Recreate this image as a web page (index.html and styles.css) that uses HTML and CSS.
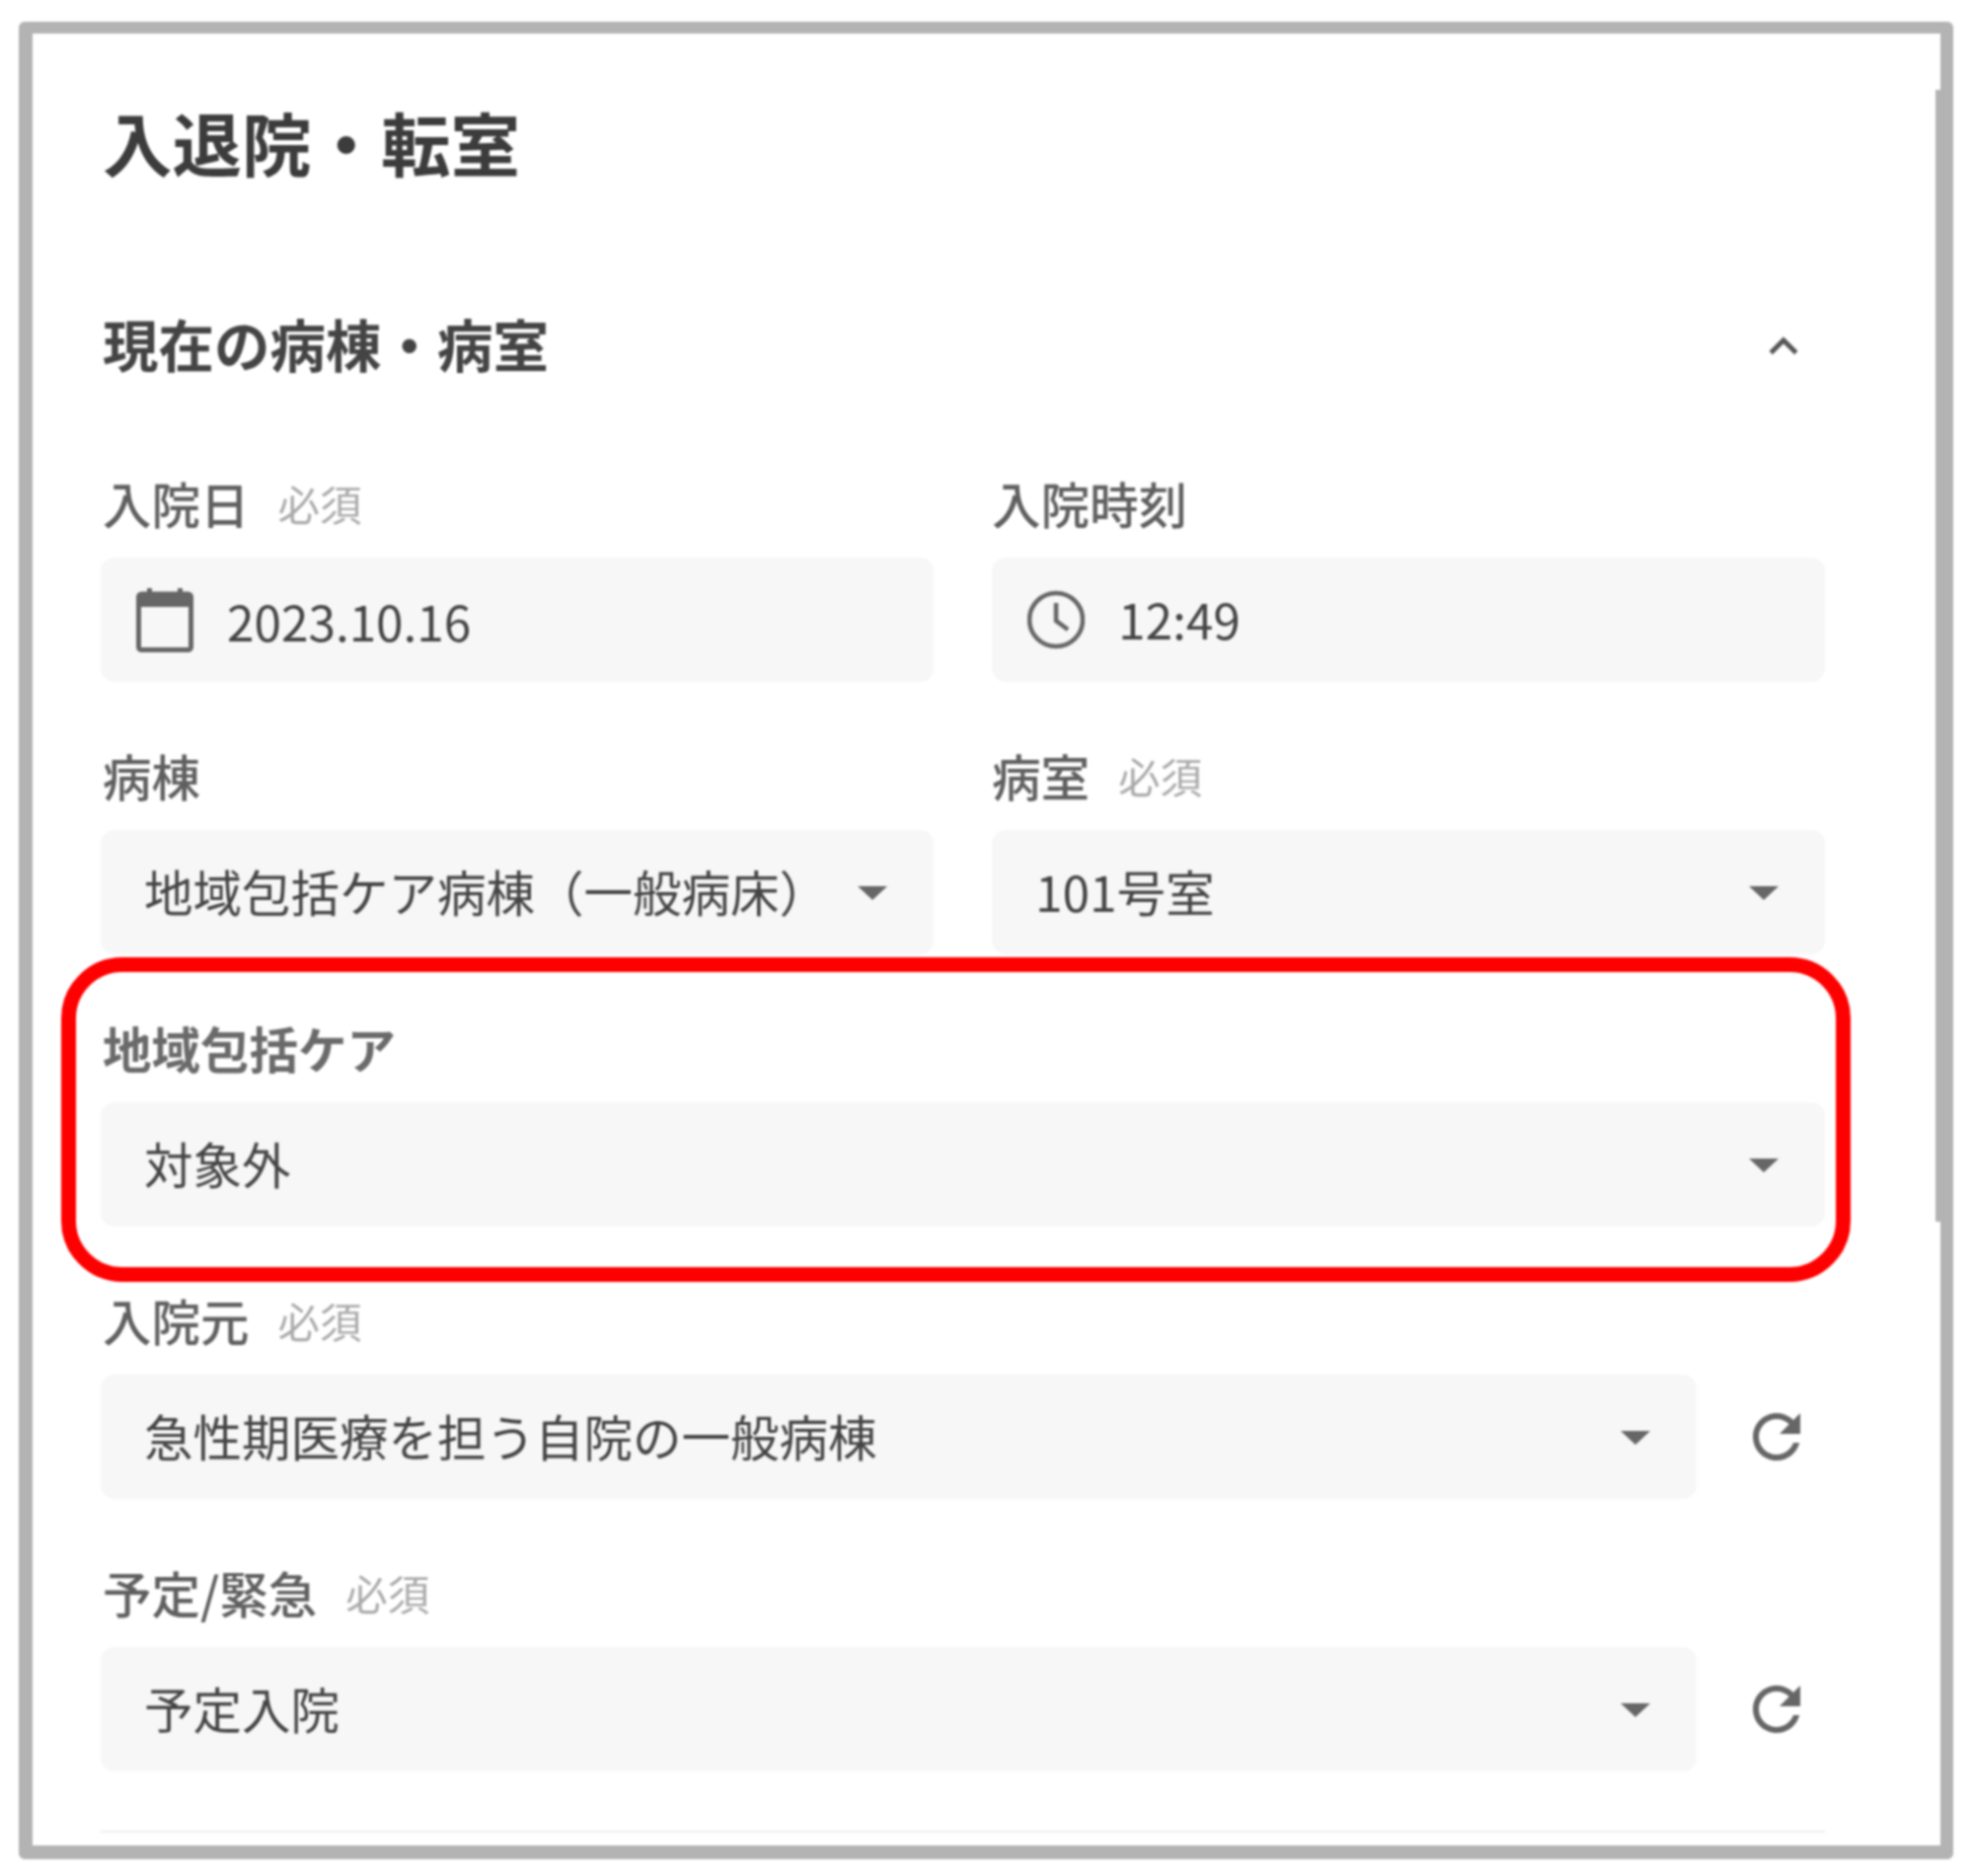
FILE: index.html
```html
<!DOCTYPE html>
<html lang="ja">
<head>
<meta charset="UTF-8" />
<title>入退院・転室</title>
<link rel="stylesheet" href="styles.css">
</head>
<body>
  <div class="frame">
    <div class="scroll-edge"></div>
    <h1 class="page-title">入退院・転室</h1>

    <div class="section-head">
      <h2>現在の病棟・病室</h2>
      <svg class="chevron" viewBox="0 0 24 24"><path d="M12 8l-6 6 1.41 1.41L12 10.83l4.59 4.58L18 14z"/></svg>
    </div>

    <div class="form">
      <div class="row-two">
        <div class="field">
          <div class="label">入院日<span class="required">必須</span></div>
          <div class="box">
            <svg class="box-icon" viewBox="0 0 58 66">
              <rect x="2.5" y="7" width="53" height="56.5" rx="3" fill="none" stroke="#666" stroke-width="5"/>
              <rect x="2" y="6" width="54" height="14" fill="#666"/>
              <rect x="11" y="1" width="5" height="7" fill="#666"/>
              <rect x="42" y="1" width="5" height="7" fill="#666"/>
            </svg>
            <span class="value date">2023.10.16</span>
          </div>
        </div>
        <div class="field">
          <div class="label">入院時刻</div>
          <div class="box">
            <svg class="box-icon" viewBox="0 0 58 66">
              <circle cx="29" cy="33" r="27" fill="none" stroke="#666" stroke-width="4.5"/>
              <path d="M29 16V34L41 43" fill="none" stroke="#666" stroke-width="4.5"/>
            </svg>
            <span class="value">12:49</span>
          </div>
        </div>
      </div>

      <div class="row-two">
        <div class="field">
          <div class="label">病棟</div>
          <div class="box select">
            <span class="value">地域包括ケア病棟（一般病床）</span>
            <i class="caret"></i>
          </div>
        </div>
        <div class="field">
          <div class="label">病室<span class="required">必須</span></div>
          <div class="box select">
            <span class="value">101号室</span>
            <i class="caret"></i>
          </div>
        </div>
      </div>

      <div class="field marked">
        <div class="label">地域包括ケア</div>
        <div class="box select">
          <span class="value">対象外</span>
          <i class="caret"></i>
        </div>
      </div>

      <div class="field">
        <div class="label">入院元<span class="required">必須</span></div>
        <div class="with-reset">
          <div class="box select">
            <span class="value">急性期医療を担う自院の一般病棟</span>
            <i class="caret"></i>
          </div>
          <svg class="reset" viewBox="0 0 24 24"><path d="M17.65 6.35C16.2 4.9 14.21 4 12 4c-4.42 0-7.99 3.58-7.99 8s3.57 8 7.99 8c3.73 0 6.84-2.55 7.73-6h-2.08c-.82 2.33-3.04 4-5.65 4-3.31 0-6-2.69-6-6s2.69-6 6-6c1.66 0 3.14.69 4.22 1.78L13 11h7V4l-2.35 2.35z"/></svg>
        </div>
      </div>

      <div class="field">
        <div class="label">予定/緊急<span class="required">必須</span></div>
        <div class="with-reset">
          <div class="box select">
            <span class="value">予定入院</span>
            <i class="caret"></i>
          </div>
          <svg class="reset" viewBox="0 0 24 24"><path d="M17.65 6.35C16.2 4.9 14.21 4 12 4c-4.42 0-7.99 3.58-7.99 8s3.57 8 7.99 8c3.73 0 6.84-2.55 7.73-6h-2.08c-.82 2.33-3.04 4-5.65 4-3.31 0-6-2.69-6-6s2.69-6 6-6c1.66 0 3.14.69 4.22 1.78L13 11h7V4l-2.35 2.35z"/></svg>
        </div>
      </div>
    </div>

    <div class="divider"></div>
  </div>
</body>
</html>
```

FILE: styles.css
```css
html, body {
  margin: 0;
  padding: 0;
  background: #fff;
}
body {
  width: 2000px;
  height: 1901px;
  overflow: hidden;
  font-family: "Noto Sans CJK JP", "Noto Sans", sans-serif;
}
.frame {
  position: relative;
  box-sizing: border-box;
  width: 1960px;
  height: 1862px;
  margin: 22px 0 0 19px;
  padding: 64px 117px 0 69px;
  background: #fff;
  border-style: solid;
  border-color: #b3b3b3;
  border-width: 12px 13px 14px 14px;
  border-radius: 6px;
  filter: blur(1px);
}
.scroll-edge {
  position: absolute;
  top: 57px;
  right: 0;
  width: 5px;
  height: 1147px;
  background: #b3b3b3;
}
.page-title {
  margin: 0 0 124px 2px;
  font-size: 70.5px;
  line-height: 90px;
  font-weight: 700;
  color: #3c3c3c;
}
.section-head {
  display: flex;
  justify-content: space-between;
  align-items: center;
  height: 80px;
  margin-bottom: 91px;
}
.section-head h2 {
  margin: 0 0 10px 2px;
  font-size: 56.5px;
  line-height: 80px;
  font-weight: 700;
  color: #444;
}
.chevron {
  width: 58px;
  height: 58px;
  margin: 0 13px 2px 0;
  fill: #555;
}
.form {
  display: flex;
  flex-direction: column;
  gap: 68px;
}
.row-two {
  display: grid;
  grid-template-columns: 844px 844px;
  justify-content: space-between;
}
.field {
  position: relative;
}
/* red annotation around the field */
.field.marked::after {
  content: "";
  position: absolute;
  top: -65px;
  left: -40px;
  right: -26px;
  bottom: -56px;
  border: 15px solid #f00;
  border-radius: 62px;
}
.label {
  display: flex;
  align-items: center;
  box-sizing: border-box;
  height: 62px;
  margin-bottom: 20px;
  padding: 0 0 9px 2px;
  font-size: 49.5px;
  font-weight: 500;
  color: #5f5f5f;
}
.row-two .field + .field .label {
  padding-left: 0;
}
.marked .label {
  font-weight: 700;
  color: #6a6a6a;
}
.required {
  margin-left: 29px;
  font-size: 42.5px;
  font-weight: 400;
  color: #aaa;
}
.box {
  display: flex;
  align-items: center;
  flex: 1;
  box-sizing: border-box;
  height: 126px;
  padding: 0 36px;
  background: #f7f7f7;
  border-radius: 14px;
}
.box-icon {
  width: 58px;
  height: 66px;
  margin-right: 34px;
}
.box.select {
  justify-content: space-between;
  padding: 0 47px 0 44px;
}
.value {
  margin-bottom: 4px;
  font-size: 49.5px;
  color: #444;
}
.value.date {
  margin-bottom: 0;
}
.caret {
  flex: none;
  width: 0;
  height: 0;
  margin-top: 2px;
  border-top: 14px solid #666;
  border-left: 15px solid transparent;
  border-right: 15px solid transparent;
}
.with-reset {
  display: flex;
  align-items: center;
  padding-right: 13px;
}
.reset {
  flex: none;
  width: 72px;
  height: 72px;
  margin-left: 45px;
  fill: #666;
}
.divider {
  height: 2px;
  margin-top: 60px;
  background: #eee;
}
```
